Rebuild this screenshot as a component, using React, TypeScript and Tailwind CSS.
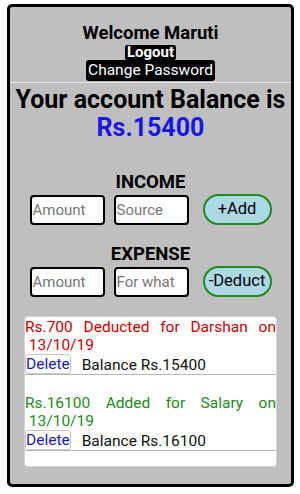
import React from "react";

const entries = [
  { text: "Rs.700 Deducted for Darshan on", date: "13/10/19", color: "text-[#d00000]", balance: "Rs.15400" },
  { text: "Rs.16100 Added for Salary on", date: "13/10/19", color: "text-[#1d8a1d]", balance: "Rs.16100" },
];

const FormRow = ({ first, second, action }: { first: string; second: string; action: string }) => (
  <div className="mt-[2px] flex items-center justify-center">
    <input
      placeholder={first}
      className="h-[30px] w-[75px] rounded-[4px] border-2 border-black bg-white px-[1px] text-[15px] outline-none placeholder:text-[#777]"
    />
    <input
      placeholder={second}
      className="ml-[9px] h-[30px] w-[75px] rounded-[4px] border-2 border-black bg-white px-[1px] text-[15px] outline-none placeholder:text-[#777]"
    />
    <button className="ml-[14px] h-[31px] w-[69px] rounded-full border-2 border-[#1e8a1e] bg-[#add8e6] text-[16.5px] text-black">
      {action}
    </button>
  </div>
);

export default function App() {
  return (
    <div className="h-[494px] w-[300px] bg-white pl-[7px] pr-[6px] pt-[4px] font-['Roboto',sans-serif]">
      <div className="flex h-[483px] flex-col items-center rounded-[5px] border-[3px] border-black bg-[#bfbfbf]">
        <h2 className="mt-[16px] text-[18.5px] font-bold leading-[21px] text-black">Welcome Maruti</h2>
        <span className="mt-[1px] rounded-[2px] bg-black px-[2px] text-[15px] font-bold leading-[15px] text-white">
          Logout
        </span>
        <span className="rounded-[3px] bg-black px-[2px] text-[15.5px] leading-[21px] text-white">Change Password</span>
        <div className="mt-[1px] h-[1px] w-full bg-[#e6e6e6]" />
        <h1 className="mt-[3px] text-[25px] font-bold leading-[27px] text-black">Your account Balance is</h1>
        <div className="mt-[1px] text-[25px] font-bold leading-[27px] text-[#1616e8]">Rs.15400</div>

        <h3 className="mt-[31px] text-[18.5px] font-bold leading-[20px] text-black">INCOME</h3>
        <FormRow first="Amount" second="Source" action="+Add" />

        <h3 className="mt-[19px] text-[18.5px] font-bold leading-[20px] text-black">EXPENSE</h3>
        <FormRow first="Amount" second="For what" action="-Deduct" />

        <div className="mt-[19px] h-[151px] w-[253px] overflow-hidden rounded-[4px] border border-[#d4d4d4] bg-white pt-[1px]">
          {entries.map((e, i) => (
            <div key={i} className={i > 0 ? "mt-[19px]" : ""}>
              <p className={`text-justify text-[15.5px] leading-[18px] ${e.color}`}>
                {e.text} {"\u00a0"}
                {e.date}
              </p>
              <div className="flex items-end text-[15.5px] leading-[18px]">
                <button className="rounded-[3px] border border-[#c8c8c8] text-[15.5px] leading-[18px] text-[#1a1ac8]">
                  Delete
                </button>
                <span className="ml-[11px] text-[#111]">Balance {e.balance}</span>
              </div>
              <div className="h-[1px] w-full bg-[#b8b8b8]" />
            </div>
          ))}
        </div>
      </div>
    </div>
  );
}
